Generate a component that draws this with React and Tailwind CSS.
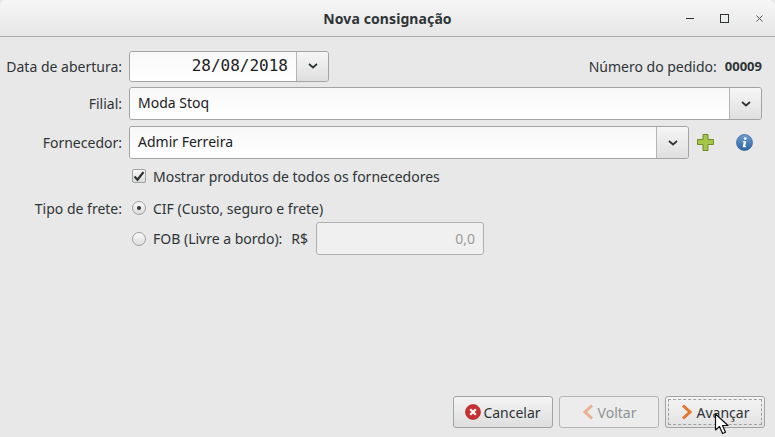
import React from "react";

const Chevron = () => (
  <svg width="10" height="6" viewBox="0 0 10 6" fill="none" stroke="#2e3436" strokeWidth="1.8"><path d="M1 1l4 3.5L9 1" /></svg>
);

const Label = ({ children }) => (
  <div className="w-[123px] pr-[1px] shrink-0 text-right text-[14px] text-[#2e3436]">{children}</div>
);

const DropBtn = ({ w }) => (
  <div className={`${w} h-full flex items-center justify-center bg-gradient-to-b from-[#f6f6f6] to-[#dfdfdf]`}><Chevron /></div>
);

const Radio = ({ on }) => (
  <div className="w-[14px] h-[14px] rounded-full border border-[#a0a0a0] bg-gradient-to-b from-[#fafafa] to-[#dcdcdc] flex items-center justify-center">
    {on && <div className="w-[4px] h-[4px] rounded-full bg-[#2e3436]" />}
  </div>
);

const Btn = ({ icon, children, cls = "", focus, text = "text-[#2e3436]" }) => (
  <div className={`relative w-[100px] h-[32px] rounded-[3px] border border-[#a3a3a3] flex items-center justify-center gap-[2px] text-[14px] ${text} ${cls}`}>
    {focus && <div className="absolute inset-[2px] border border-dashed border-[#a0a0a0] rounded-[1px]" />}
    {icon}
    <span>{children}</span>
  </div>
);

export default function App() {
  return (
    <div className="w-[775px] h-[437px] bg-[#e8e8e8] flex flex-col overflow-hidden" style={{ fontFamily: '"Noto Sans", "Open Sans", sans-serif' }}>
      <div className="relative h-[37px] shrink-0 rounded-t-[6px] bg-gradient-to-b from-[#f6f6f6] to-[#e6e6e6] border-b border-[#acacac] flex items-center justify-center">
        <span className="text-[14px] font-bold text-[#2e3436] tracking-[0.1px]">Nova consignação</span>
        <div className="absolute right-0 top-0 h-full flex items-center">
          <svg className="absolute right-[81px] top-[18px]" width="8" height="1"><rect width="8" height="1" fill="#2e3436" /></svg>
          <svg className="absolute right-[46px] top-[14px]" width="9" height="9" fill="none" stroke="#2e3436"><rect x="0.5" y="0.5" width="8" height="8" /></svg>
          <svg className="absolute right-[12px] top-[15px]" width="7" height="7" fill="none" stroke="#555753" strokeWidth="1"><path d="M0.5 0.5l6 6M6.5 0.5l-6 6" /></svg>
        </div>
      </div>

      <div className="flex-1 flex flex-col">
        <div className="flex items-center h-[32px] mt-[13px] pr-[13px] shrink-0">
          <Label>Data de abertura:</Label>
          <div className="ml-[6px] w-[200px] h-[31px] rounded-[3px] border border-[#a3a3a3] flex overflow-hidden">
            <div className="w-[166px] pr-[8px] text-right text-[16px] leading-[27px] bg-gradient-to-b from-[#f8f8f8] to-white text-[#1c2022]" style={{ fontFamily: '"DejaVu Sans Mono", monospace' }}>28/08/2018</div>
            <div className="w-[1px] bg-[#b5b5b5]" />
            <DropBtn w="flex-1" />
          </div>
          <div className="ml-auto flex gap-[8px] text-[14px] text-[#2e3436]">
            <span>Número do pedido:</span>
            <span className="font-bold text-[13px] leading-[20px]">00009</span>
          </div>
        </div>

        <div className="flex items-center h-[33px] mt-[5px] pr-[13px] shrink-0">
          <Label>Filial:</Label>
          <div className="ml-[6px] flex-1 h-[33px] rounded-[3px] border border-[#a3a3a3] flex overflow-hidden">
            <div className="flex-1 pl-[8px] text-[14px] leading-[30px] bg-gradient-to-b from-[#f8f8f8] to-white text-[#1c2022]">Moda Stoq</div>
            <div className="w-[1px] bg-[#b5b5b5]" />
            <DropBtn w="w-[31px]" />
          </div>
        </div>

        <div className="flex items-center h-[33px] mt-[6px] shrink-0">
          <Label>Fornecedor:</Label>
          <div className="ml-[6px] w-[560px] h-[33px] rounded-[3px] border border-[#a3a3a3] flex overflow-hidden">
            <div className="flex-1 pl-[8px] text-[14px] leading-[30px] bg-gradient-to-b from-[#f8f8f8] to-white text-[#1c2022]">Admir Ferreira</div>
            <div className="w-[1px] bg-[#b5b5b5]" />
            <DropBtn w="w-[31px]" />
          </div>
          <svg className="ml-[8px]" width="17" height="17" viewBox="0 0 17 17">
            <path d="M6 .5h5v5h5.5v5H11v6H6v-6H.5v-5H6z" fill="#a4c64a" stroke="#6f8f22" />
          </svg>
          <svg className="ml-[22px]" width="17" height="17" viewBox="0 0 17 17">
            <defs><linearGradient id="i" x1="0" y1="0" x2="0" y2="1"><stop offset="0" stopColor="#6f9fd0" /><stop offset="1" stopColor="#2a62a4" /></linearGradient></defs>
            <circle cx="8.5" cy="8.5" r="8" fill="url(#i)" stroke="#2f5f98" strokeWidth="0.7" />
            <circle cx="9.2" cy="4.6" r="1.4" fill="#fff" />
            <path d="M6.8 7.2h3.4l-1 5h1l-.2 1H6.7l1-5h-1z" fill="#fff" />
          </svg>
        </div>

        <div className="flex items-center h-[20px] mt-[7px] pl-[132px] gap-[7px] shrink-0">
          <div className="w-[14px] h-[14px] rounded-[2px] border border-[#a0a0a0] bg-gradient-to-b from-[#fafafa] to-[#dcdcdc] flex items-center justify-center">
            <svg width="12" height="11" viewBox="0 0 12 11" fill="none" stroke="#2e3436" strokeWidth="2.2"><path d="M1.5 5.5l3 3.2L10.5 1" /></svg>
          </div>
          <span className="text-[14px] text-[#2e3436]">Mostrar produtos de todos os fornecedores</span>
        </div>

        <div className="flex items-center h-[20px] mt-[12px] shrink-0">
          <Label>Tipo de frete:</Label>
          <div className="ml-[9px] mr-[7px]"><Radio on /></div>
          <span className="text-[14px] text-[#2e3436]">CIF (Custo, seguro e frete)</span>
        </div>

        <div className="flex items-center h-[33px] mt-[4px] pl-[132px] shrink-0">
          <Radio />
          <span className="ml-[7px] text-[14px] text-[#2e3436]">FOB (Livre a bordo):</span>
          <span className="ml-[9px] text-[14px] text-[#2e3436]">R$</span>
          <div className="ml-[8px] w-[168px] h-[33px] rounded-[3px] border border-[#b0b0b0] bg-[#f0f0f0] pr-[8px] text-right text-[14px] leading-[31px] text-[#9a9c9c]">0,0</div>
        </div>

        <div className="mt-auto mb-[9px] pr-[10px] flex justify-end gap-[6px]">
          <Btn cls="bg-gradient-to-b from-[#f4f4f4] to-[#dedede]" icon={
            <svg width="16" height="16" viewBox="0 0 16 16"><circle cx="8" cy="8" r="7.5" fill="#c9302f" stroke="#9c1f1f" strokeWidth="0.6" /><path d="M5.2 5.2l5.6 5.6M10.8 5.2l-5.6 5.6" stroke="#fff" strokeWidth="2.2" /></svg>
          }>Cancelar</Btn>
          <Btn cls="border-[#b5b5b5] bg-[#ececec] gap-[4px]" text="text-[#8c9294]" icon={
            <svg width="12" height="16" viewBox="0 0 12 16" fill="none" stroke="#eab08f" strokeWidth="3"><path d="M10 1.5L3 8l7 6.5" /></svg>
          }>Voltar</Btn>
          <Btn focus cls="bg-gradient-to-b from-[#f4f4f4] to-[#e2e2e2] gap-[4px]" icon={
            <svg width="12" height="16" viewBox="0 0 12 16" fill="none" stroke="#e2762f" strokeWidth="3"><path d="M2 1.5L9 8l-7 6.5" /></svg>
          }>Avançar</Btn>
        </div>
      </div>

      <svg className="absolute left-[714px] top-[413px]" width="15" height="23" viewBox="0 0 15 23">
        <path d="M1.5 1v16l4-3.5 3 7 3-1.2-3-6.8h5.5z" fill="#fff" stroke="#111" strokeWidth="1.2" strokeLinejoin="round" />
      </svg>
    </div>
  );
}
